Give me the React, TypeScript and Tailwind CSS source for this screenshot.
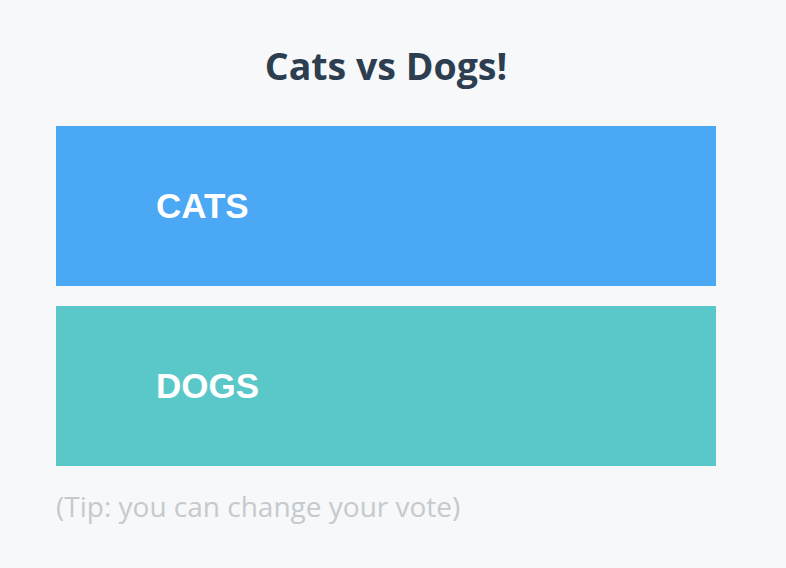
import React from "react";

export default function App() {
  return (
    <div className="min-h-[568px] w-full bg-[#f7f8fa] px-[56px] pt-[40px]">
      <div className="w-[660px]">
        <h1 className="text-center text-[37.5px] font-bold leading-[52px] text-[#2c3e50] [font-family:'Open_Sans',sans-serif]">
          Cats vs Dogs!
        </h1>
        <div className="mt-[34px] flex flex-col gap-[20px]">
          <button className="flex h-[160px] w-[660px] items-center bg-[#4aa8f4] pl-[100px] text-[35px] font-bold text-white [font-family:'Liberation_Sans',Arial,sans-serif]">
            CATS
          </button>
          <button className="flex h-[160px] w-[660px] items-center bg-[#5ac8c8] pl-[100px] text-[35px] font-bold text-white [font-family:'Liberation_Sans',Arial,sans-serif]">
            DOGS
          </button>
        </div>
        <p className="mt-[20px] text-[28px] leading-[40px] text-[#c4cacd] [font-family:'Open_Sans',sans-serif]">
          (Tip: you can change your vote)
        </p>
      </div>
    </div>
  );
}
